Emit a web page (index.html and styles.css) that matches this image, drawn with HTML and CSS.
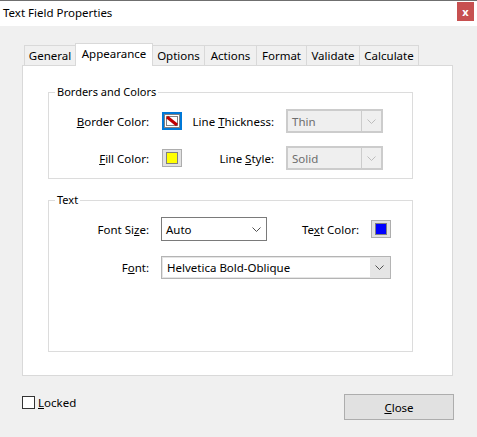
FILE: index.html
```html
<!DOCTYPE html>
<html>
<head>
    <title>Text Field Properties</title>
    <link rel="stylesheet" href="styles.css">
</head>
<body>
    <div class="window">
        <div class="titlebar">
            <span class="title">Text Field Properties</span>
            <span class="close-btn">x</span>
        </div>

        <div class="dialog">
            <ul class="tabs">
                <li class="tab t-general">General</li>
                <li class="tab t-appearance active">Appearance</li>
                <li class="tab t-options">Options</li>
                <li class="tab t-actions">Actions</li>
                <li class="tab t-format">Format</li>
                <li class="tab t-validate">Validate</li>
                <li class="tab t-calculate">Calculate</li>
            </ul>

            <div class="panel">
                <fieldset class="group colors-group">
                    <legend>Borders and Colors</legend>
                    <div class="grid colors-grid">
                        <label class="lbl"><u>B</u>order Color:</label>
                        <span class="swatch focused">
                            <svg width="20" height="18" viewBox="0 0 20 18">
                                <rect x="0" y="0" width="20" height="18" fill="#0078d7"/>
                                <rect x="2" y="2" width="16" height="14" fill="#ffffff"/>
                                <rect x="2.5" y="2.5" width="15" height="13" fill="none" stroke="#000" stroke-dasharray="1 1"/>
                                <rect x="4.5" y="4.5" width="11" height="9" fill="#fff" stroke="#808080"/>
                                <line x1="5" y1="5" x2="15" y2="13" stroke="#c00000" stroke-width="3"/>
                            </svg>
                        </span>
                        <label class="lbl pad">Line <u>T</u>hickness:</label>
                        <div class="select disabled"><span class="value">Thin</span><span class="arrow"><svg width="9" height="5" viewBox="0 0 9 5"><polyline points="0.5,0.5 4.5,4.5 8.5,0.5" fill="none" stroke="#bdbdbd"/></svg></span></div>

                        <label class="lbl"><u>F</u>ill Color:</label>
                        <span class="swatch"><span class="chip yellow"></span></span>
                        <label class="lbl pad">Line <u>S</u>tyle:</label>
                        <div class="select disabled"><span class="value">Solid</span><span class="arrow"><svg width="9" height="5" viewBox="0 0 9 5"><polyline points="0.5,0.5 4.5,4.5 8.5,0.5" fill="none" stroke="#bdbdbd"/></svg></span></div>
                    </div>
                </fieldset>

                <fieldset class="group text-group">
                    <legend>Text</legend>
                    <div class="grid text-grid">
                        <label class="lbl">Font Si<u>z</u>e:</label>
                        <div class="select plain size-select"><span class="value">Auto</span><span class="arrow"><svg width="9" height="5" viewBox="0 0 9 5"><polyline points="0.5,0.5 4.5,4.5 8.5,0.5" fill="none" stroke="#505050"/></svg></span></div>
                        <label class="lbl pad">Te<u>x</u>t Color:</label>
                        <span class="swatch"><span class="chip blue"></span></span>

                        <label class="lbl">F<u>o</u>nt:</label>
                        <div class="select combo font-select"><span class="value">Helvetica Bold-Oblique</span><span class="arrow"><svg width="9" height="5" viewBox="0 0 9 5"><polyline points="0.5,0.5 4.5,4.5 8.5,0.5" fill="none" stroke="#505050"/></svg></span></div>
                    </div>
                </fieldset>
            </div>

            <div class="footer">
                <label class="check"><span class="box"></span><span><u>L</u>ocked</span></label>
                <button class="close"><u>C</u>lose</button>
            </div>
        </div>
    </div>
</body>
</html>
```

FILE: styles.css
```css
body {
    margin: 0;
    font-family: 'Noto Sans', 'Liberation Sans', sans-serif;
    font-size: 11px;
    color: #000;
    background-color: #f0f0f0;
}
u {
    text-decoration: underline;
    text-underline-offset: 1px;
}
.window {
    width: 477px;
    height: 437px;
    display: flex;
    flex-direction: column;
}
.titlebar {
    height: 25px;
    border-top: 1px solid #6f6f6f;
    background-color: #fff;
    display: flex;
    align-items: center;
    justify-content: space-between;
    padding: 0 3px 0 3px;
}
.title {
    font-size: 11.5px;
    margin-top: -2px;
}
.close-btn {
    width: 17px;
    height: 19px;
    background-color: #c75050;
    color: #fff;
    font-weight: bold;
    font-size: 11px;
    display: flex;
    align-items: center;
    justify-content: center;
    margin-top: -4px;
}
.dialog {
    flex: 1;
    padding: 17px 23px 0 22px;
    display: flex;
    flex-direction: column;
}
.tabs {
    list-style-type: none;
    margin: 0;
    padding: 0 0 0 2px;
    display: flex;
    align-items: flex-end;
    height: 22px;
    position: relative;
    z-index: 1;
}
.tab {
    box-sizing: border-box;
    height: 20px;
    line-height: 19px;
    text-align: center;
    border: 1px solid #d9d9d9;
    border-bottom: none;
    margin-left: -1px;
    background-color: #f0f0f0;
    font-size: 11.5px;
}
.tab:first-child {
    margin-left: 0;
}
.tab.active {
    height: 23px;
    line-height: 20px;
    background-color: #fff;
    margin-bottom: -1px;
    padding-bottom: 2px;
}
.t-general { width: 52px; }
.t-appearance { width: 78px; }
.t-options { width: 53px; }
.t-actions { width: 53px; }
.t-format { width: 51px; }
.t-validate { width: 54px; }
.t-calculate { width: 60px; }
.panel {
    background-color: #fff;
    border: 1px solid #d9d9d9;
    padding: 0 0 0 25px;
    box-sizing: border-box;
    width: 431px;
    height: 311px;
}
.group {
    border: 1px solid #dcdcdc;
    margin: 0;
    padding: 0;
    width: 365px;
    box-sizing: border-box;
}
.group legend {
    margin-left: 6px;
    padding: 0 2px;
    line-height: 16px;
}
.colors-group {
    margin-top: 18px;
    height: 95px;
}
.text-group {
    margin-top: 13px;
    height: 160px;
}
.grid {
    display: grid;
    align-items: center;
}
.colors-grid {
    grid-template-columns: 100px 33px 104px 97px;
    grid-template-rows: 24px 24px;
    row-gap: 13px;
    margin-top: 9px;
}
.text-grid {
    grid-template-columns: 100px 118px 104px 20px;
    grid-template-rows: 24px 24px;
    row-gap: 14px;
    margin-top: 9px;
}
.lbl {
    text-align: right;
    white-space: nowrap;
    font-size: 11.5px;
}
.lbl.pad {
    padding-right: 12px;
}
.swatch {
    justify-self: end;
    width: 20px;
    height: 18px;
    box-sizing: border-box;
    border: 1px solid #adadad;
    background-color: #e1e1e1;
    display: flex;
    align-items: center;
    justify-content: center;
}
.swatch.focused {
    border: none;
    background: none;
}
.chip {
    width: 12px;
    height: 12px;
    box-sizing: border-box;
    border: 1px solid #808080;
}
.chip.yellow {
    background-color: #ffff00;
}
.chip.blue {
    background-color: #0000ff;
}
.select {
    height: 100%;
    box-sizing: border-box;
    display: flex;
    align-items: stretch;
    font-size: 11.5px;
}
.select .value {
    flex: 1;
    padding-left: 4px;
    display: flex;
    align-items: center;
}
.select .arrow {
    width: 19px;
    display: flex;
    align-items: center;
    justify-content: center;
}
.select.disabled {
    border: 1px solid #cccccc;
    background-color: #cccccc;
    padding: 1px;
    color: #6d6d6d;
}
.select.disabled .value {
    background-color: #efefef;
}
.select.disabled .arrow {
    background-color: #efefef;
    margin-left: 1px;
}
.select.plain {
    border: 1px solid #7a7a7a;
    background-color: #fff;
}
.size-select {
    justify-self: end;
    width: 106px;
}
.select.combo {
    border: 1px solid #b4b4b4;
    background-color: #e5e5e5;
    padding: 1px;
}
.select.combo .value {
    background-color: #fff;
}
.font-select {
    grid-column: 2 / 5;
    margin-left: 12px;
    height: 23px;
}
.footer {
    display: flex;
    justify-content: space-between;
    align-items: flex-start;
    margin-top: 17px;
}
.check {
    display: flex;
    align-items: center;
    gap: 3px;
    margin-top: 2px;
    font-size: 11.5px;
}
.check .box {
    width: 13px;
    height: 13px;
    box-sizing: border-box;
    border: 1px solid #333;
    background-color: #fff;
}
button.close {
    width: 110px;
    height: 26px;
    font-family: inherit;
    font-size: 11.5px;
    color: #000;
    background-color: #e1e1e1;
    border: 1px solid #adadad;
    padding: 0;
    margin-top: 1px;
}
```
